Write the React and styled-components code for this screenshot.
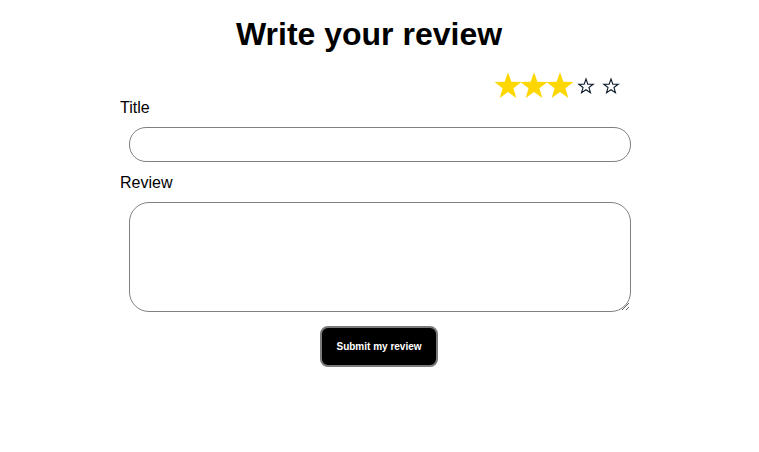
import styled, { createGlobalStyle } from "styled-components";

/* Global reset */
const GlobalStyle = createGlobalStyle`
  body {
    margin: 0;
    background: #ffffff;
    font-family: "Liberation Sans", Arial, sans-serif;
    color: #000000;
  }
`;

/* Page */
const Page = styled.div`
  display: flex;
  flex-direction: column;
  width: 759px;
  min-height: 452px;
`;

const Heading = styled.h1`
  margin: 16px 0 0;
  padding-right: 21px;
  font-size: 32px;
  line-height: 36px;
  font-weight: 700;
  text-align: center;
`;

/* Form */
const Form = styled.form`
  display: flex;
  flex-direction: column;
  width: 511px;
  margin-left: 120px;
`;

/* Star rating */
const StarRow = styled.div`
  display: flex;
  justify-content: flex-end;
  align-items: center;
  height: 27px;
  margin-top: 20px;
  padding-right: 8px;
`;

const StarBox = styled.span`
  display: flex;
  align-items: center;
  justify-content: center;
  width: ${(p) => (p.$filled ? "26px" : "25px")};
  height: 27px;

  svg {
    overflow: visible;
  }
`;

const Label = styled.label`
  display: block;
  font-size: 16px;
  line-height: 18px;
  margin-top: ${(p) => p.$top || "0"};
`;

const TextInput = styled.input`
  box-sizing: border-box;
  width: 502px;
  height: 35px;
  margin: 10px 0 0 9px;
  padding: 0 14px;
  border: 1px solid #808080;
  border-radius: 17px;
  font-family: "Liberation Sans", Arial, sans-serif;
  font-size: 14px;
  outline: none;
`;

const TextArea = styled.textarea`
  box-sizing: border-box;
  width: 502px;
  height: 110px;
  margin: 10px 0 0 9px;
  padding: 10px 14px;
  border: 1px solid #808080;
  border-radius: 20px;
  font-family: "Liberation Sans", Arial, sans-serif;
  font-size: 14px;
  outline: none;
`;

const ButtonRow = styled.div`
  display: flex;
  justify-content: center;
  width: 500px;
  margin: 14px 0 0 9px;
`;

const SubmitButton = styled.button`
  box-sizing: border-box;
  width: 118px;
  height: 41px;
  background: #000000;
  border: 2px solid #7a7a7a;
  border-radius: 8px;
  color: #ffffff;
  font-family: "Liberation Sans", Arial, sans-serif;
  font-weight: 700;
  font-size: 10px;
  cursor: pointer;
`;

const starPoints = (cx, cy, outer, inner) => {
  const pts = [];
  for (let i = 0; i < 10; i++) {
    const r = i % 2 === 0 ? outer : inner;
    const a = (Math.PI / 5) * i - Math.PI / 2;
    pts.push(`${(cx + r * Math.cos(a)).toFixed(2)},${(cy + r * Math.sin(a)).toFixed(2)}`);
  }
  return pts.join(" ");
};

function Star({ filled }) {
  if (filled) {
    return (
      <svg width="26" height="27" viewBox="0 0 26 27">
        <polygon points={starPoints(13, 14.4, 14.2, 5.7)} fill="#ffd700" />
      </svg>
    );
  }
  return (
    <svg width="16" height="16" viewBox="0 0 16 16">
      <polygon
        points={starPoints(8, 8.6, 7.6, 3.1)}
        fill="none"
        stroke="#0a1a2a"
        strokeWidth="1.1"
      />
    </svg>
  );
}

export default function App() {
  const rating = 3;

  return (
    <Page>
      <GlobalStyle />
      <Heading>Write your review</Heading>

      <Form onSubmit={(e) => e.preventDefault()}>
        <StarRow>
          {[1, 2, 3, 4, 5].map((n) => (
            <StarBox key={n} $filled={n <= rating}>
              <Star filled={n <= rating} />
            </StarBox>
          ))}
        </StarRow>

        <Label htmlFor="title">Title</Label>
        <TextInput id="title" type="text" />

        <Label htmlFor="review" $top="12px">
          Review
        </Label>
        <TextArea id="review" />

        <ButtonRow>
          <SubmitButton type="submit">Submit my review</SubmitButton>
        </ButtonRow>
      </Form>
    </Page>
  );
}
